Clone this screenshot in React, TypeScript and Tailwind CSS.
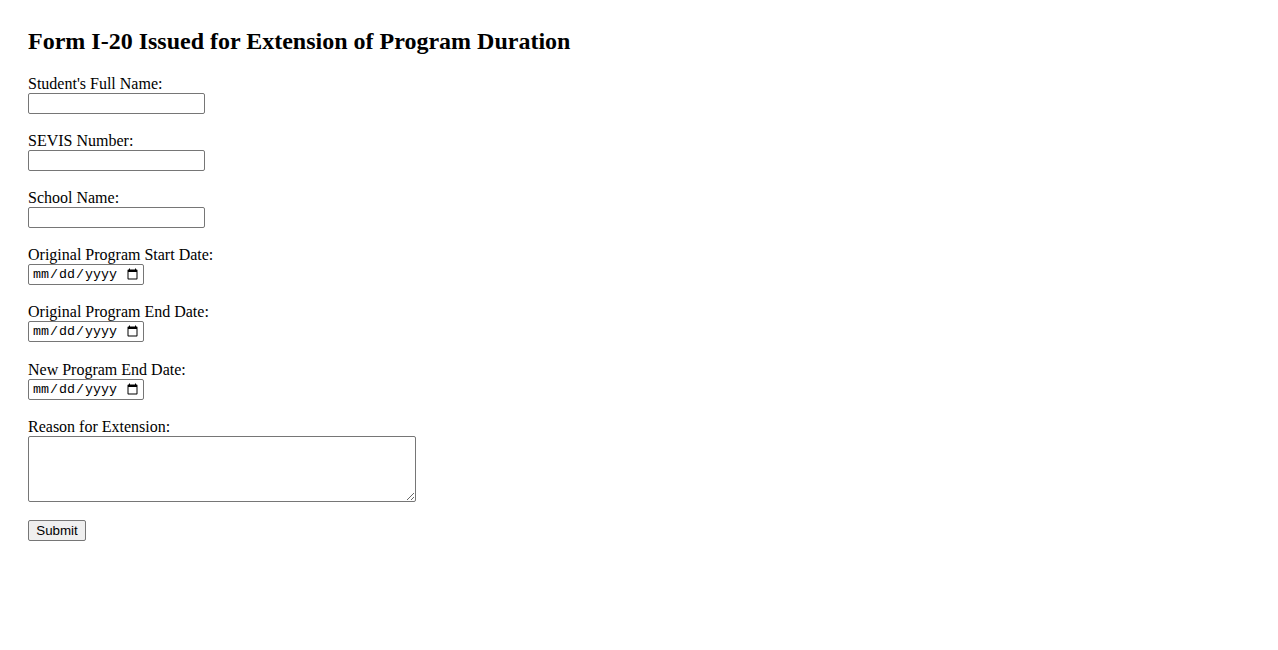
import React from "react";

const textFields = [
    { id: "studentName", label: "Student's Full Name:" },
    { id: "sevisNumber", label: "SEVIS Number:" },
    { id: "schoolName", label: "School Name:" },
];

const dateFields = [
    { id: "originalStart", label: "Original Program Start Date:", gap: "mb-[18px]" },
    { id: "originalEnd", label: "Original Program End Date:", gap: "mb-[19px]" },
    { id: "newEnd", label: "New Program End Date:", gap: "mb-[18px]" },
];

function App() {
    return (
        <div className="min-h-[650px] bg-white px-[28px] pt-[28px] text-black font-['Liberation_Serif','Times_New_Roman',serif]">
            <h2 className="text-[24px] font-bold leading-[27px] mb-[20px]">
                Form I-20 Issued for Extension of Program Duration
            </h2>
            <form onSubmit={(e) => e.preventDefault()} className="flex flex-col items-start">
                {textFields.map((f) => (
                    <div key={f.id} className="flex flex-col items-start mb-[18px]">
                        <label htmlFor={f.id} className="text-[16px] leading-[18px]">
                            {f.label}
                        </label>
                        <input
                            id={f.id}
                            type="text"
                            className="w-[177px] h-[21px] border border-[#767676] rounded-[2px] px-[2px] text-[13.33px] font-['Liberation_Sans',Arial,sans-serif] bg-white"
                        />
                    </div>
                ))}
                {dateFields.map((f) => (
                    <div key={f.id} className={"flex flex-col items-start " + f.gap}>
                        <label htmlFor={f.id} className="text-[16px] leading-[18px]">
                            {f.label}
                        </label>
                        <input
                            id={f.id}
                            type="date"
                            className="w-[116px] h-[21px] border border-[#767676] rounded-[2px] pl-[3px] pr-[2px] text-[13.33px] font-['Liberation_Mono','Courier_New',monospace] bg-white"
                        />
                    </div>
                ))}
                <div className="flex flex-col items-start mb-[18px]">
                    <label htmlFor="reason" className="text-[16px] leading-[18px]">
                        Reason for Extension:
                    </label>
                    <textarea
                        id="reason"
                        className="w-[388px] h-[66px] border border-[#767676] rounded-[2px] p-[2px] text-[13.33px] font-['Liberation_Mono',monospace] bg-white"
                    ></textarea>
                </div>
                <button
                    type="submit"
                    className="w-[58px] h-[21px] border border-[#767676] rounded-[2px] bg-[#efefef] text-[13.33px] leading-[15px] font-['Liberation_Sans',Arial,sans-serif]"
                >
                    Submit
                </button>
            </form>
        </div>
    );
}

export default App;
